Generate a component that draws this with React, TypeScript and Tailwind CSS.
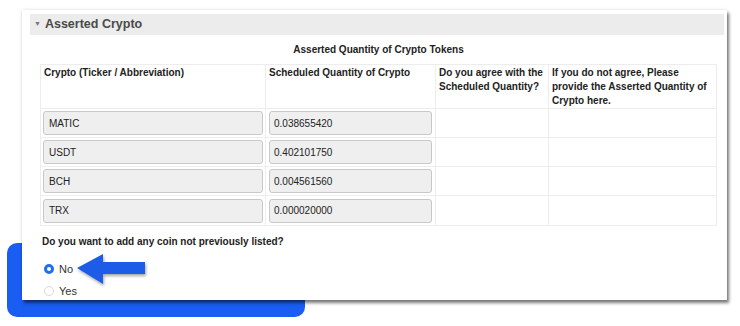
import React from "react";

const rows = [
  ["MATIC", "0.038655420"],
  ["USDT", "0.402101750"],
  ["BCH", "0.004561560"],
  ["TRX", "0.000020000"],
];

export default function App() {
  return (
    <div
      className="relative w-[740px] h-[326px] overflow-hidden bg-white"
      style={{ fontFamily: '"Liberation Sans", Arial, sans-serif' }}
    >
      <div className="absolute left-[7px] top-[243px] w-[298px] h-[74px] rounded-[10px] bg-[#1a5df3]" />
      <div className="relative z-10 ml-[22px] mt-[10px] w-[705px] h-[290px] bg-white shadow-[2px_3px_3px_rgba(0,0,0,0.5),0_0_3px_rgba(0,0,0,0.15)] pt-[4px] pl-[8px] pr-[3px]">
        <div className="h-[21px] bg-[#ececec] flex items-center pl-[4px] text-[#4a4a4a]">
          <span className="text-[7px] mr-[4px] text-[#777]">▼</span>
          <span className="text-[12.5px] font-bold">Asserted Crypto</span>
        </div>
        <div className="pl-[10px] pr-[7px]">
          <div className="mt-[8px] h-[14px] leading-[14px] text-center text-[10px] font-bold text-[#222]">
            Asserted Quantity of Crypto Tokens
          </div>
          <div className="mt-[7px] w-[677px] border border-[#ededed] text-[10px] text-[#222]">
            <div className="flex h-[44px] border-b border-[#ededed] font-bold leading-[14px]">
              <div className="w-[225px] px-[3px] pt-[1px] border-r border-[#ededed]">
                Crypto (Ticker / Abbreviation)
              </div>
              <div className="w-[170px] px-[3px] pt-[1px] border-r border-[#ededed]">
                Scheduled Quantity of Crypto
              </div>
              <div className="w-[113px] px-[3px] pt-[1px] border-r border-[#ededed]">
                Do you agree with the
                <br />
                Scheduled Quantity?
              </div>
              <div className="flex-1 px-[3px] pt-[1px]">
                If you do not agree, Please
                <br />
                provide the Asserted Quantity of
                <br />
                Crypto here.
              </div>
            </div>
            {rows.map(([t, q], i) => (
              <div
                key={t}
                className={`flex h-[29px] ${i < rows.length - 1 ? "border-b border-[#ededed]" : ""}`}
              >
                <div className="w-[225px] px-[2px] flex items-center border-r border-[#ededed]">
                  <div className="w-full h-[24px] rounded-[3px] border border-[#c8c8c8] bg-[#efefef] flex items-center pl-[5px]">
                    {t}
                  </div>
                </div>
                <div className="w-[170px] px-[3px] flex items-center border-r border-[#ededed]">
                  <div className="w-full h-[24px] rounded-[3px] border border-[#c8c8c8] bg-[#efefef] flex items-center pl-[4px]">
                    {q}
                  </div>
                </div>
                <div className="w-[113px] border-r border-[#ededed]" />
                <div className="flex-1" />
              </div>
            ))}
          </div>
          <div className="mt-[9px] pl-[2px] h-[14px] leading-[14px] text-[10px] font-bold text-[#222]">
            Do you want to add any coin not previously listed?
          </div>
          <div className="mt-[12px] pl-[4px] flex flex-col gap-[6px] text-[11px] text-[#333]">
            <div className="flex items-center h-[16px]">
              <span className="w-[10px] h-[10px] rounded-full border-[3px] border-[#1f6fe8] bg-white" />
              <span className="ml-[5px]">No</span>
            </div>
            <div className="flex items-center h-[16px]">
              <span className="w-[10px] h-[10px] rounded-full border border-[#d8d8d8] bg-white" />
              <span className="ml-[5px]">Yes</span>
            </div>
          </div>
        </div>
      </div>
      <svg
        className="absolute left-[70px] top-[248px] z-20"
        width="84"
        height="44"
        viewBox="70 248 84 44"
      >
        <defs>
          <filter id="sh" x="-20%" y="-20%" width="140%" height="160%">
            <feDropShadow dx="1" dy="2" stdDeviation="1.5" floodColor="#000" floodOpacity="0.35" />
          </filter>
        </defs>
        <polygon
          points="77,268 103,254 103,262 145,262 145,274 103,274 103,284"
          fill="#1b5ce6"
          filter="url(#sh)"
        />
      </svg>
    </div>
  );
}
